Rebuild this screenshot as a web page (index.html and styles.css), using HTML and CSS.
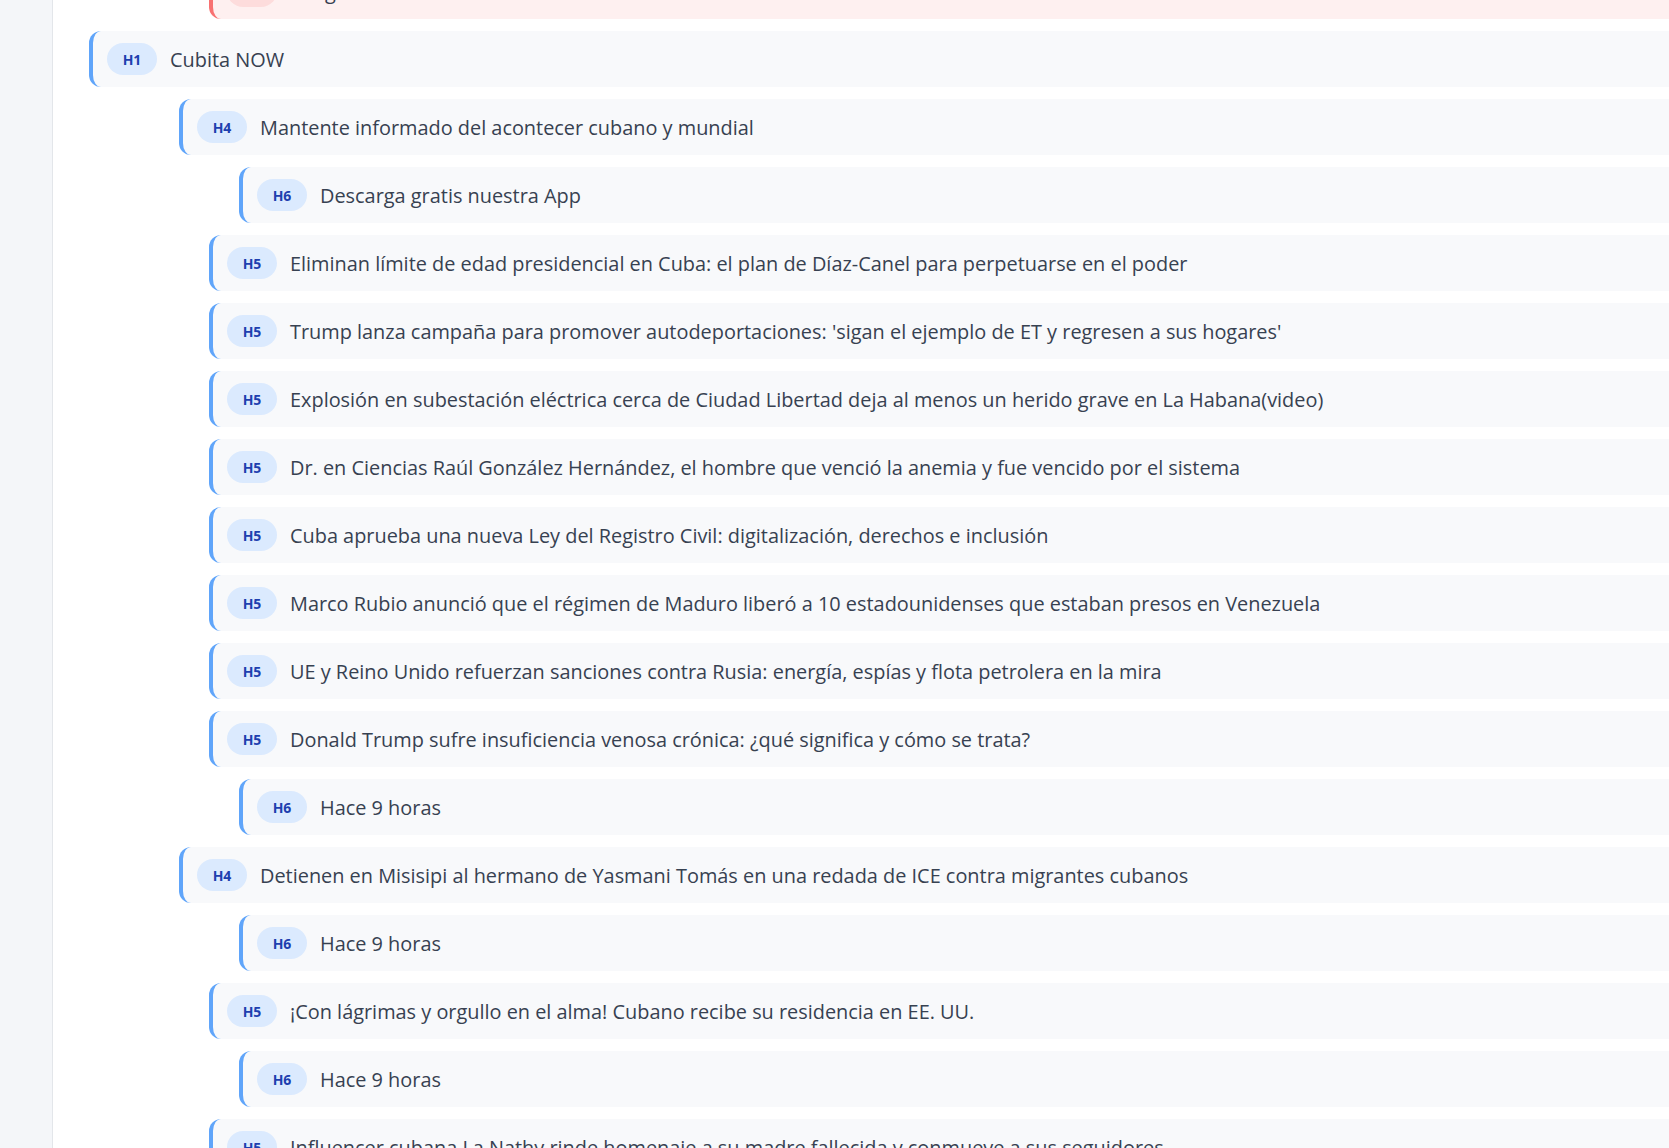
FILE: index.html
```html
<!DOCTYPE html>
<html lang="es">
<head>
<meta charset="utf-8">
<title>Estructura de encabezados</title>
<link rel="stylesheet" href="styles.css">
</head>
<body>
<div class="layout">
  <aside class="sidebar"></aside>
  <main class="main">
    <ul class="tree">
      <li class="node lvl-5 warn"><span class="badge">H5</span><span class="text">Imagen sin texto</span></li>
      <li class="node lvl-1"><span class="badge">H1</span><span class="text">Cubita NOW</span></li>
      <li class="node lvl-4"><span class="badge">H4</span><span class="text">Mantente informado del acontecer cubano y mundial</span></li>
      <li class="node lvl-6"><span class="badge">H6</span><span class="text">Descarga gratis nuestra App</span></li>
      <li class="node lvl-5"><span class="badge">H5</span><span class="text">Eliminan límite de edad presidencial en Cuba: el plan de Díaz-Canel para perpetuarse en el poder</span></li>
      <li class="node lvl-5"><span class="badge">H5</span><span class="text">Trump lanza campaña para promover autodeportaciones: 'sigan el ejemplo de ET y regresen a sus hogares'</span></li>
      <li class="node lvl-5"><span class="badge">H5</span><span class="text">Explosión en subestación eléctrica cerca de Ciudad Libertad deja al menos un herido grave en La Habana(video)</span></li>
      <li class="node lvl-5"><span class="badge">H5</span><span class="text">Dr. en Ciencias Raúl González Hernández, el hombre que venció la anemia y fue vencido por el sistema</span></li>
      <li class="node lvl-5"><span class="badge">H5</span><span class="text">Cuba aprueba una nueva Ley del Registro Civil: digitalización, derechos e inclusión</span></li>
      <li class="node lvl-5"><span class="badge">H5</span><span class="text">Marco Rubio anunció que el régimen de Maduro liberó a 10 estadounidenses que estaban presos en Venezuela</span></li>
      <li class="node lvl-5"><span class="badge">H5</span><span class="text">UE y Reino Unido refuerzan sanciones contra Rusia: energía, espías y flota petrolera en la mira</span></li>
      <li class="node lvl-5"><span class="badge">H5</span><span class="text">Donald Trump sufre insuficiencia venosa crónica: ¿qué significa y cómo se trata?</span></li>
      <li class="node lvl-6"><span class="badge">H6</span><span class="text">Hace 9 horas</span></li>
      <li class="node lvl-4"><span class="badge">H4</span><span class="text">Detienen en Misisipi al hermano de Yasmani Tomás en una redada de ICE contra migrantes cubanos</span></li>
      <li class="node lvl-6"><span class="badge">H6</span><span class="text">Hace 9 horas</span></li>
      <li class="node lvl-5"><span class="badge">H5</span><span class="text">¡Con lágrimas y orgullo en el alma! Cubano recibe su residencia en EE. UU.</span></li>
      <li class="node lvl-6"><span class="badge">H6</span><span class="text">Hace 9 horas</span></li>
      <li class="node lvl-5"><span class="badge">H5</span><span class="text">Influencer cubana La Nathy rinde homenaje a su madre fallecida y conmueve a sus seguidores</span></li>
    </ul>
  </main>
</div>
</body>
</html>
```
FILE: styles.css
```css
html, body {
  margin: 0;
  padding: 0;
  height: 100%;
  overflow: hidden;
  background: #ffffff;
  font-family: "Open Sans", "Noto Sans", sans-serif;
}

.layout {
  display: flex;
  height: 100vh;
}

.sidebar {
  flex: none;
  width: 53px;
  box-sizing: border-box;
  background: #f4f6f9;
  border-right: 1px solid #e3e6ea;
}

.main {
  flex: 1;
  min-width: 0;
  padding-left: 36px;
  overflow: hidden;
}

.tree {
  list-style: none;
  margin: -37px 0 0;
  padding: 0;
  display: flex;
  flex-direction: column;
  gap: 12px;
}

.node {
  display: flex;
  align-items: center;
  gap: 13px;
  height: 56px;
  box-sizing: border-box;
  padding-left: 14px;
  background: #f8f9fb;
  border-left: 4px solid #60a5fa;
  border-radius: 12px 0 0 12px;
}

.lvl-1 { margin-left: 0; }
.lvl-4 { margin-left: 90px; }
.lvl-5 { margin-left: 120px; }
.lvl-6 { margin-left: 150px; }

.node.warn {
  background: #fef0f0;
  border-left-color: #f87171;
}

.badge {
  flex: none;
  width: 50px;
  height: 32px;
  border-radius: 16px;
  background: #dbeafe;
  color: #1e40af;
  font-size: 14px;
  font-weight: 700;
  display: flex;
  align-items: center;
  justify-content: center;
}

.warn .badge {
  background: #fddcdc;
  color: #991b1b;
}

.text {
  font-size: 19.9px;
  color: #374151;
  white-space: nowrap;
}
```
